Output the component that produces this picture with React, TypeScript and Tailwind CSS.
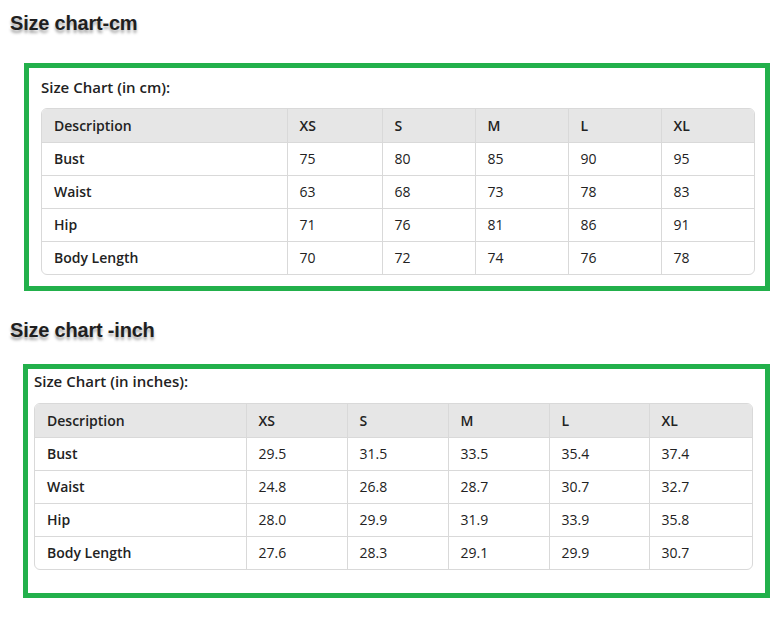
const sizes = ['XS', 'S', 'M', 'L', 'XL'];

type Chart = {
  title: string;
  rows: { label: string; values: string[] }[];
  cols: string[];
};

const cmChart: Chart = {
  title: 'Size Chart (in cm):',
  cols: ['w-[245px]', 'w-[95px]', 'w-[93px]', 'w-[93px]', 'w-[93px]', 'w-[95px]'],
  rows: [
    { label: 'Bust', values: ['75', '80', '85', '90', '95'] },
    { label: 'Waist', values: ['63', '68', '73', '78', '83'] },
    { label: 'Hip', values: ['71', '76', '81', '86', '91'] },
    { label: 'Body Length', values: ['70', '72', '74', '76', '78'] },
  ],
};

const inchChart: Chart = {
  title: 'Size Chart (in inches):',
  cols: ['w-[211px]', 'w-[101px]', 'w-[101px]', 'w-[101px]', 'w-[100px]', 'w-[104px]'],
  rows: [
    { label: 'Bust', values: ['29.5', '31.5', '33.5', '35.4', '37.4'] },
    { label: 'Waist', values: ['24.8', '26.8', '28.7', '30.7', '32.7'] },
    { label: 'Hip', values: ['28.0', '29.9', '31.9', '33.9', '35.8'] },
    { label: 'Body Length', values: ['27.6', '28.3', '29.1', '29.9', '30.7'] },
  ],
};

const Heading = ({ children }: { children: string }) => (
  <h2 className="pl-[10px] text-[20px] leading-[28px] font-bold tracking-[-0.2px] text-[#1f1f1f] font-['Liberation_Sans',Arial,sans-serif] [text-shadow:0_3px_3px_rgba(0,0,0,0.35)]">
    {children}
  </h2>
);

const SizeTable = ({ chart }: { chart: Chart }) => (
  <div className="overflow-hidden rounded-md border border-[#d9d9d9]">
    <table className="w-full table-fixed border-collapse text-[14px] text-[#222]">
      <colgroup>
        {chart.cols.map((c, i) => (
          <col key={i} className={c} />
        ))}
      </colgroup>
      <thead>
        <tr className="h-[33px] bg-[#e6e6e6]">
          <th className="px-3 text-left font-semibold">Description</th>
          {sizes.map((s) => (
            <th key={s} className="border-l border-[#d9d9d9] px-3 text-left font-semibold">
              {s}
            </th>
          ))}
        </tr>
      </thead>
      <tbody>
        {chart.rows.map((row) => (
          <tr key={row.label} className="h-[33px] border-t border-[#d9d9d9]">
            <td className="px-3 font-semibold">{row.label}</td>
            {row.values.map((v, i) => (
              <td key={i} className="border-l border-[#d9d9d9] px-3">
                {v}
              </td>
            ))}
          </tr>
        ))}
      </tbody>
    </table>
  </div>
);

export default function App() {
  return (
    <div className="min-h-[627px] w-[781px] bg-white font-['Open_Sans',sans-serif]">
      <div className="pt-[9px]">
        <Heading>Size chart-cm</Heading>
      </div>

      <div className="ml-[24px] mt-[26px] w-[746px] border-[5px] border-[#22b04b] pb-[11px] pl-[12px] pr-[10px] pt-[7px]">
        <div className="text-[15px] font-semibold text-[#222] leading-[22px] mb-[10px] pt-[1px]">
          {cmChart.title}
        </div>
        <SizeTable chart={cmChart} />
      </div>

      <div className="mt-[25px]">
        <Heading>Size chart -inch</Heading>
      </div>

      <div className="ml-[23px] mt-[20px] w-[747px] border-[5px] border-[#22b04b] pb-[23px] pl-[6px] pr-[12px] pt-[1px]">
        <div className="text-[15px] font-semibold text-[#222] leading-[22px] mb-[11px]">
          {inchChart.title}
        </div>
        <SizeTable chart={inchChart} />
      </div>
    </div>
  );
}
